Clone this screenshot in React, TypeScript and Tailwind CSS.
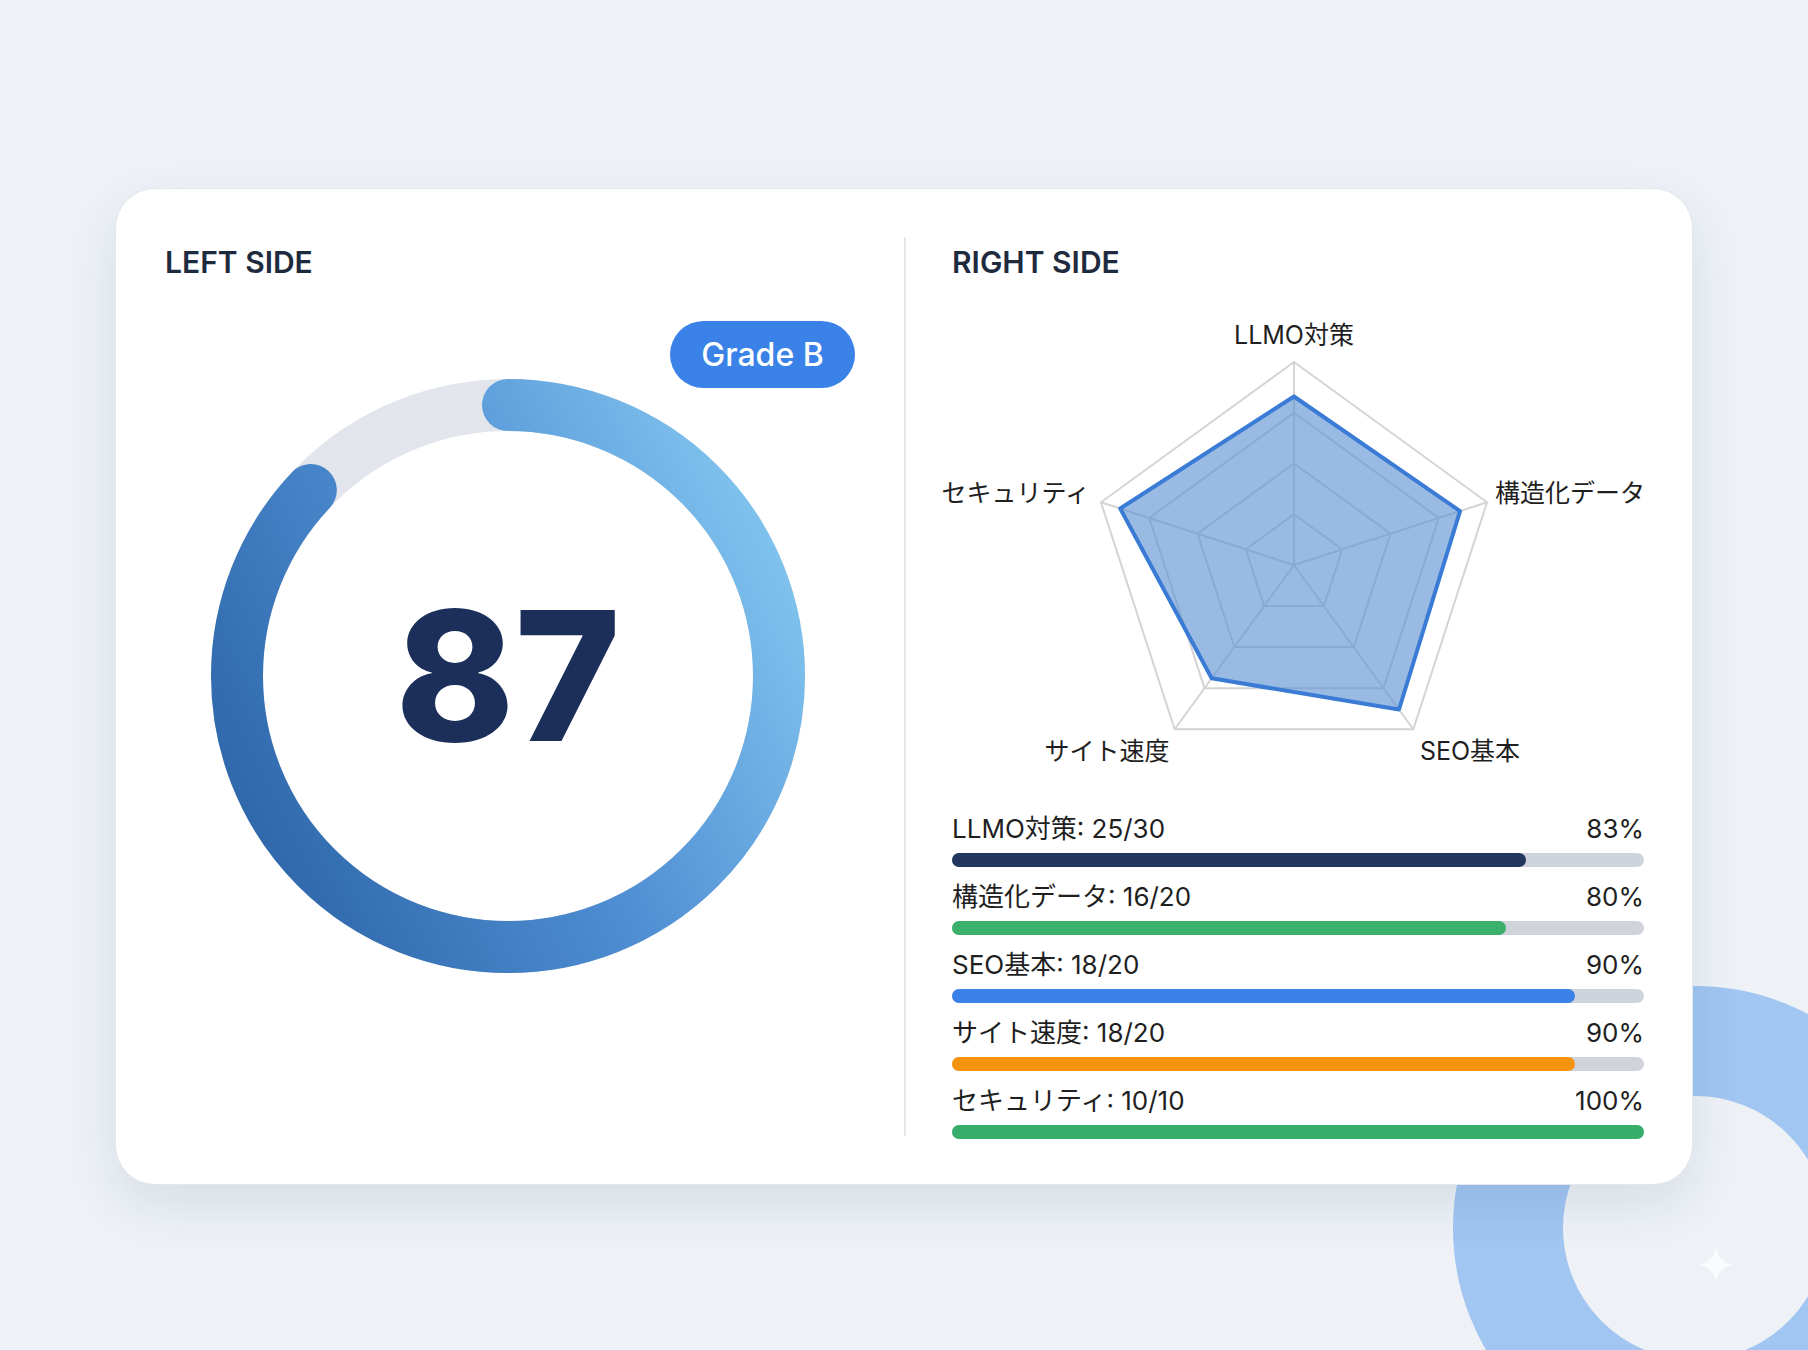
import React from "react";

const font = { fontFamily: 'Inter, "Noto Sans CJK JP", sans-serif' };

const rows = [
  { l: "LLMO対策: 25/30", p: 83, c: "bg-[#22365e]" },
  { l: "構造化データ: 16/20", p: 80, c: "bg-[#3bb06b]" },
  { l: "SEO基本: 18/20", p: 90, c: "bg-[#3b82e8]" },
  { l: "サイト速度: 18/20", p: 90, c: "bg-[#f5930f]" },
  { l: "セキュリティ: 10/10", p: 100, c: "bg-[#36ad6a]" },
];

function pt(i: number, r: number, cx: number, cy: number) {
  const a = ((-90 + 72 * i) * Math.PI) / 180;
  return [cx + r * Math.cos(a), cy + r * Math.sin(a)];
}
function poly(vals: number[], R: number, cx: number, cy: number) {
  return vals.map((v, i) => pt(i, v * R, cx, cy).join(",")).join(" ");
}

function Radar() {
  const cx = 342, cy = 243, R = 203;
  const data = [0.83, 0.86, 0.88, 0.69, 0.9];
  return (
    <svg width="692" height="480" viewBox="0 0 692 480" overflow="visible" className="mt-[45px] block overflow-visible">
      {[1, 0.75, 0.5, 0.25].map((lv) => (
        <polygon key={lv} points={poly([lv, lv, lv, lv, lv], R, cx, cy)} fill="none" stroke="#d4d4d4" strokeWidth="2" />
      ))}
      {[0, 1, 2, 3, 4].map((i) => {
        const [x, y] = pt(i, R, cx, cy);
        return <line key={i} x1={cx} y1={cy} x2={x} y2={y} stroke="#d4d4d4" strokeWidth="2" />;
      })}
      <polygon points={poly(data, R, cx, cy)} fill="#5b8fd0" fillOpacity="0.62" stroke="#3a7bd5" strokeWidth="4" strokeLinejoin="round" />
      <g fill="#1f1f1f" fontSize="25" style={font}>
        <text x="342" y="22" textAnchor="middle">LLMO対策</text>
        <text x="138" y="180" textAnchor="end">セキュリティ</text>
        <text x="543" y="180">構造化データ</text>
        <text x="155" y="438" textAnchor="middle">サイト速度</text>
        <text x="518" y="438" textAnchor="middle">SEO基本</text>
      </g>
    </svg>
  );
}

function Ring() {
  const r = 271;
  const c = 2 * Math.PI * r;
  const d = `M300,${300 - r} A${r},${r} 0 1,1 300,${300 + r} A${r},${r} 0 1,1 300,${300 - r}`;
  return (
    <svg width="600" height="600" viewBox="0 0 600 600" className="block">
      <defs>
        <linearGradient id="rg" x1="0" y1="0.75" x2="1" y2="0.25">
          <stop offset="0" stopColor="#2f68ab" />
          <stop offset="0.5" stopColor="#4f8ed3" />
          <stop offset="1" stopColor="#80c3ee" />
        </linearGradient>
      </defs>
      <circle cx="300" cy="300" r={r} fill="none" stroke="#e2e6ec" strokeWidth="52" />
      <path d={d} fill="none" stroke="url(#rg)" strokeWidth="52" strokeLinecap="round" strokeDasharray={`${c * 0.87} ${c}`} />
      <text x="300" y="365" textAnchor="middle" fontSize="180" fontWeight="800" fill="#1b2f5a" style={font}>87</text>
    </svg>
  );
}

export default function App() {
  return (
    <div className="relative w-[1808px] h-[1350px] overflow-hidden bg-[#eef2f7]" style={font}>
      <div className="absolute left-[1453px] top-[986px] w-[484px] h-[484px] rounded-full border-[110px] border-[#8dbaf0] opacity-80" />
      <div className="absolute left-[1695px] top-[1240px] text-[50px] leading-none text-white/70">✦</div>
      <div className="relative ml-[115px] mt-[188px] w-[1578px] h-[997px] rounded-[40px] bg-white border border-[#e3e7ee] shadow-[0_20px_50px_rgba(30,50,90,0.10)] flex">
        <div className="relative w-[789px] pl-[49px] pt-[58px]">
          <div className="text-[30px] font-semibold text-[#1e2a3d] leading-[30px]">LEFT SIDE</div>
          <div className="absolute left-[554px] top-[132px] w-[185px] h-[67px] rounded-full bg-[#3b82e8] text-white text-[32px] font-medium flex items-center justify-center">
            Grade B
          </div>
          <div className="ml-[43px] mt-[99px]">
            <Ring />
          </div>
        </div>
        <div className="w-[2px] bg-[#e5e7eb] my-[48px]" />
        <div className="flex-1 pl-[46px] pr-[48px] pt-[58px]">
          <div className="text-[30px] font-semibold text-[#1e2a3d] leading-[30px]">RIGHT SIDE</div>
          <Radar />
          <div className="mt-[13px] flex flex-col gap-[16px]">
            {rows.map((r) => (
              <div key={r.l}>
                <div className="flex justify-between text-[26px] leading-[28px] text-[#1f1f1f]">
                  <span>{r.l}</span>
                  <span>{r.p}%</span>
                </div>
                <div className="mt-[10px] h-[14px] rounded-full bg-[#cfd4dc]">
                  <div className={`h-full rounded-full ${r.c}`} style={{ width: `${r.p}%` }} />
                </div>
              </div>
            ))}
          </div>
        </div>
      </div>
    </div>
  );
}
